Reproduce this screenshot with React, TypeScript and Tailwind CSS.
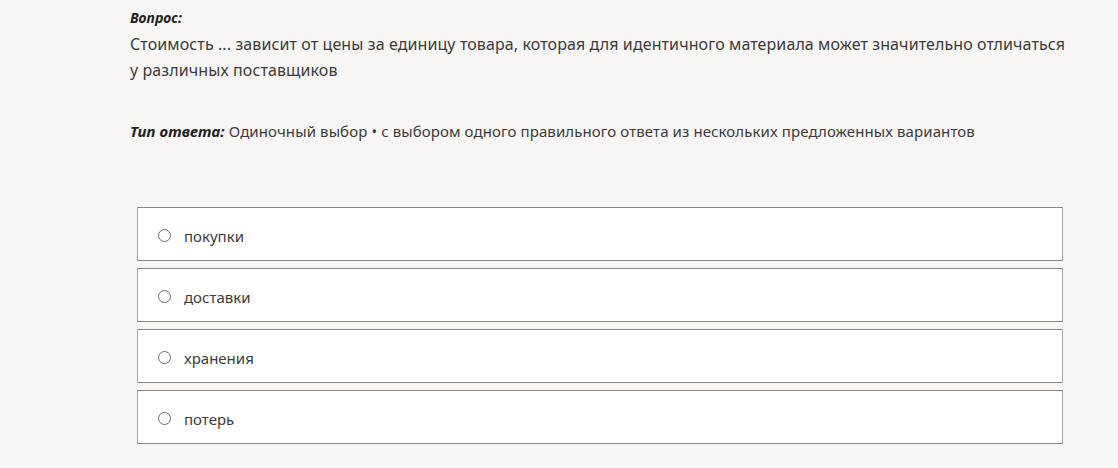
import { useState } from "react";

const options = ["покупки", "доставки", "хранения", "потерь"];

export default function App() {
  const [selected, setSelected] = useState<number | null>(null);

  return (
    <div
      className="min-h-[468px] w-full bg-[#f7f6f5] pl-[130px] pt-[8px] text-[#3b3b3b]"
      style={{ fontFamily: '"Noto Sans", "Open Sans", sans-serif' }}
    >
      <div className="w-[980px]">
        <div className="text-[14px] font-bold italic leading-[20px] text-[#222]">
          Вопрос:
        </div>
        <p className="mt-[3px] whitespace-nowrap text-[16px] leading-[26px] tracking-[0.1px]">
          Стоимость ... зависит от цены за единицу товара, которая для
          идентичного материала может значительно отличаться
          <br />у различных поставщиков
        </p>

        <p className="mt-[35px] text-[15px] leading-[26px] tracking-[0.1px]">
          <span className="font-bold italic text-[#222]">Тип ответа:</span>{" "}
          Одиночный выбор • с выбором одного правильного ответа из нескольких
          предложенных вариантов
        </p>
      </div>

      {/* варианты ответа */}
      <div className="ml-[7px] mt-[63px] flex w-[926px] flex-col gap-[7px]">
        {options.map((opt, i) => (
          <label
            key={opt}
            onClick={() => setSelected(i)}
            className="flex h-[54px] cursor-pointer items-center border border-x-[#a9a9a9] border-y-[#878787] bg-white pl-[20px] pt-[3px]"
          >
            <span className="flex h-[13px] w-[13px] items-center justify-center rounded-full border-[1.5px] border-[#6b6b6b]">
              {selected === i && (
                <span className="h-[6px] w-[6px] rounded-full bg-[#333]" />
              )}
            </span>
            <span className="ml-[13px] text-[15px] leading-[20px]">{opt}</span>
          </label>
        ))}
      </div>
    </div>
  );
}
